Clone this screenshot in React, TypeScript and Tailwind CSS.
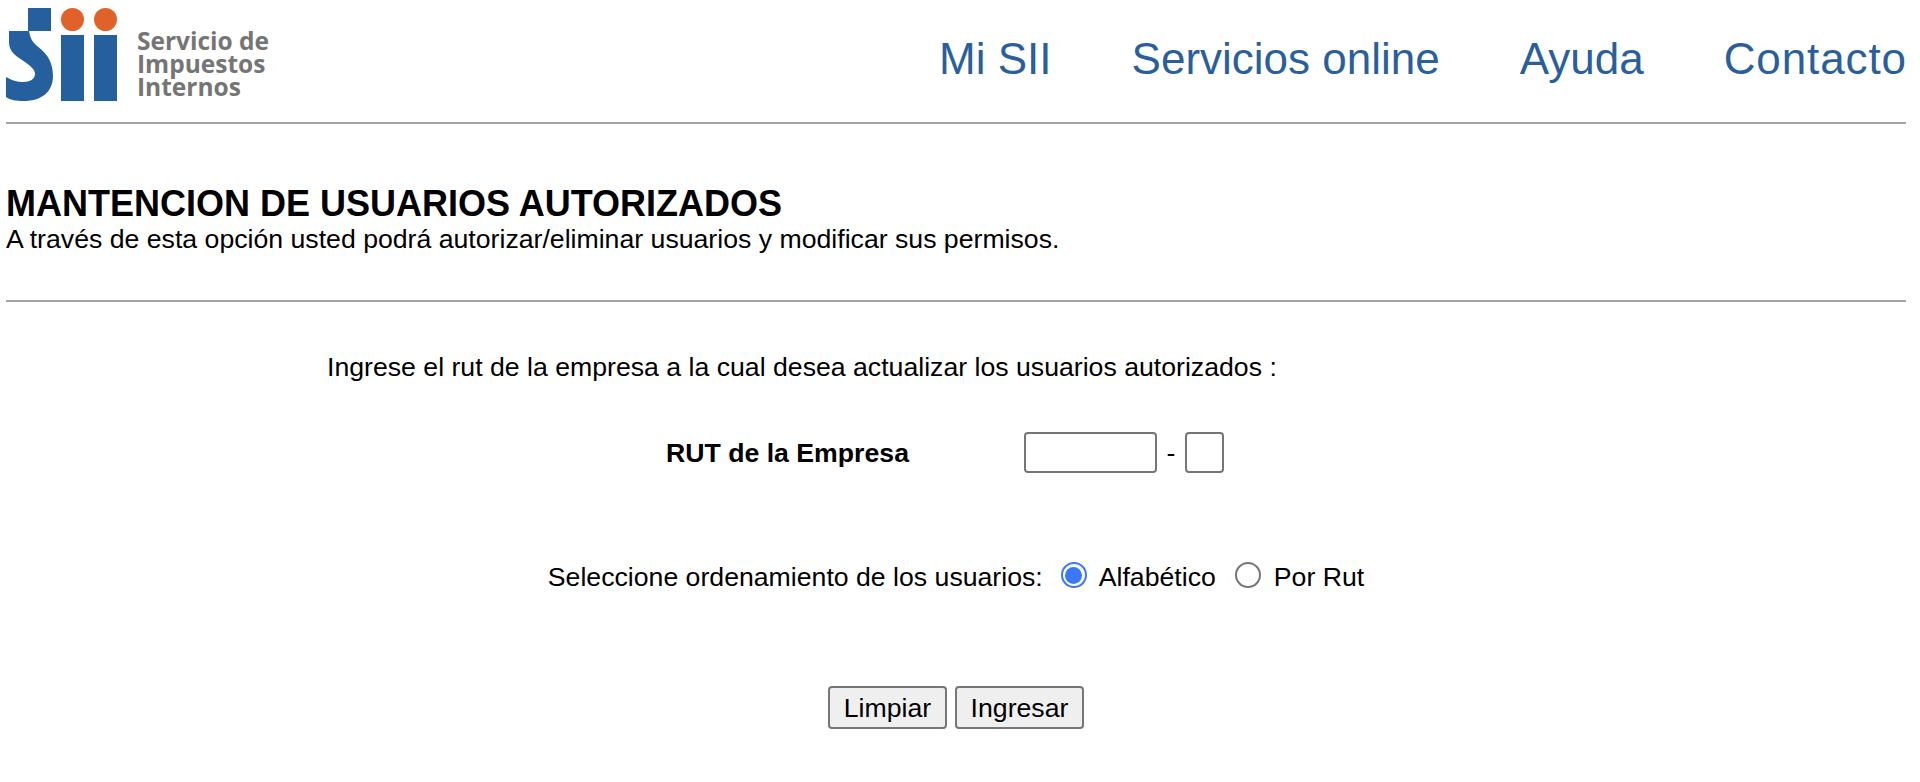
function SiiLogo() {
  return (
    <svg width="114" height="104" viewBox="6 0 114 104" className="shrink-0">
      <rect x="28" y="8" width="23" height="23" fill="#255f9e" />
      <circle cx="72.5" cy="19.5" r="11.5" fill="#e0622a" />
      <circle cx="105.5" cy="19.5" r="11.5" fill="#e0622a" />
      <rect x="61" y="35" width="23" height="66" fill="#255f9e" />
      <rect x="94" y="35" width="23" height="66" fill="#255f9e" />
      <path
        d="M9 31H29C30 36 31 40 35 44C41 50 53 56 53 76C53 93 40 101 24 101C16 101 10 100 6 97V77C11 80 17 82 23 82C30 82 35 79 35 74C35 69 30 66 25 62C16 56 9 52 9 42Z"
        fill="#255f9e"
      />
    </svg>
  );
}

export default function App() {
  return (
    <main className="min-h-screen bg-white pl-[6px] pr-[14px] text-black font-['Liberation_Sans',Arial,sans-serif]">
      <header className="flex h-[122px] items-start justify-between">
        <div className="flex items-start">
          <SiiLogo />
          <div className="ml-[17px] mt-[29px] text-[24.5px] leading-[23px] font-bold text-[#757575] font-['Open_Sans',sans-serif]">
            <div>Servicio de</div>
            <div>Impuestos</div>
            <div>Internos</div>
          </div>
        </div>
        <nav className="mt-[33px] mr-[-1px] flex gap-[80px] text-[44px] leading-[52px] text-[#2a5f9e]">
          <a>Mi SII</a>
          <a>Servicios online</a>
          <a>Ayuda</a>
          <a className="tracking-[0.9px]">Contacto</a>
        </nav>
      </header>
      <hr className="h-[2px] border-0 bg-[#a5a5a5]" />

      <h1 className="mt-[60px] text-[36px] leading-[40px] font-bold">MANTENCION DE USUARIOS AUTORIZADOS</h1>
      <p className="text-[26.67px] leading-[31px]">A través de esta opción usted podrá autorizar/eliminar usuarios y modificar sus permisos.</p>
      <hr className="mt-[45px] h-[2px] border-0 bg-[#a5a5a5]" />

      <p className="mt-[50px] pl-[321px] text-[26.67px] leading-[30px]">
        Ingrese el rut de la empresa a la cual desea actualizar los usuarios autorizados :
      </p>

      <div className="mt-[50px] flex items-center pl-[660px] text-[26.67px]">
        <label className="w-[358px] font-bold">RUT de la Empresa</label>
        <input className="h-[41px] w-[133px] rounded-[4px] border-2 border-[#767676]" />
        <span className="mx-[9.5px]">-</span>
        <input className="h-[41px] w-[39px] rounded-[4px] border-2 border-[#767676]" />
      </div>

      <div className="mt-[84px] flex items-center justify-center text-[26.67px]">
        <span>Seleccione ordenamiento de los usuarios:</span>
        <span className="mb-[4px] ml-[18px] flex h-[26px] w-[26px] items-center justify-center rounded-full border-2 border-[#3b78f5]">
          <span className="h-[17px] w-[17px] rounded-full bg-[#3b78f5]" />
        </span>
        <span className="ml-[12px]">Alfabético</span>
        <span className="mb-[4px] ml-[19px] h-[26px] w-[26px] rounded-full border-2 border-[#767676]" />
        <span className="ml-[13px]">Por Rut</span>
      </div>

      <div className="mt-[89px] flex justify-center gap-[8px] text-[26.67px]">
        <button className="h-[43px] w-[119px] rounded-[4px] border-2 border-[#767676] bg-[#efefef]">Limpiar</button>
        <button className="h-[43px] w-[129px] rounded-[4px] border-2 border-[#767676] bg-[#efefef]">Ingresar</button>
      </div>
    </main>
  );
}
